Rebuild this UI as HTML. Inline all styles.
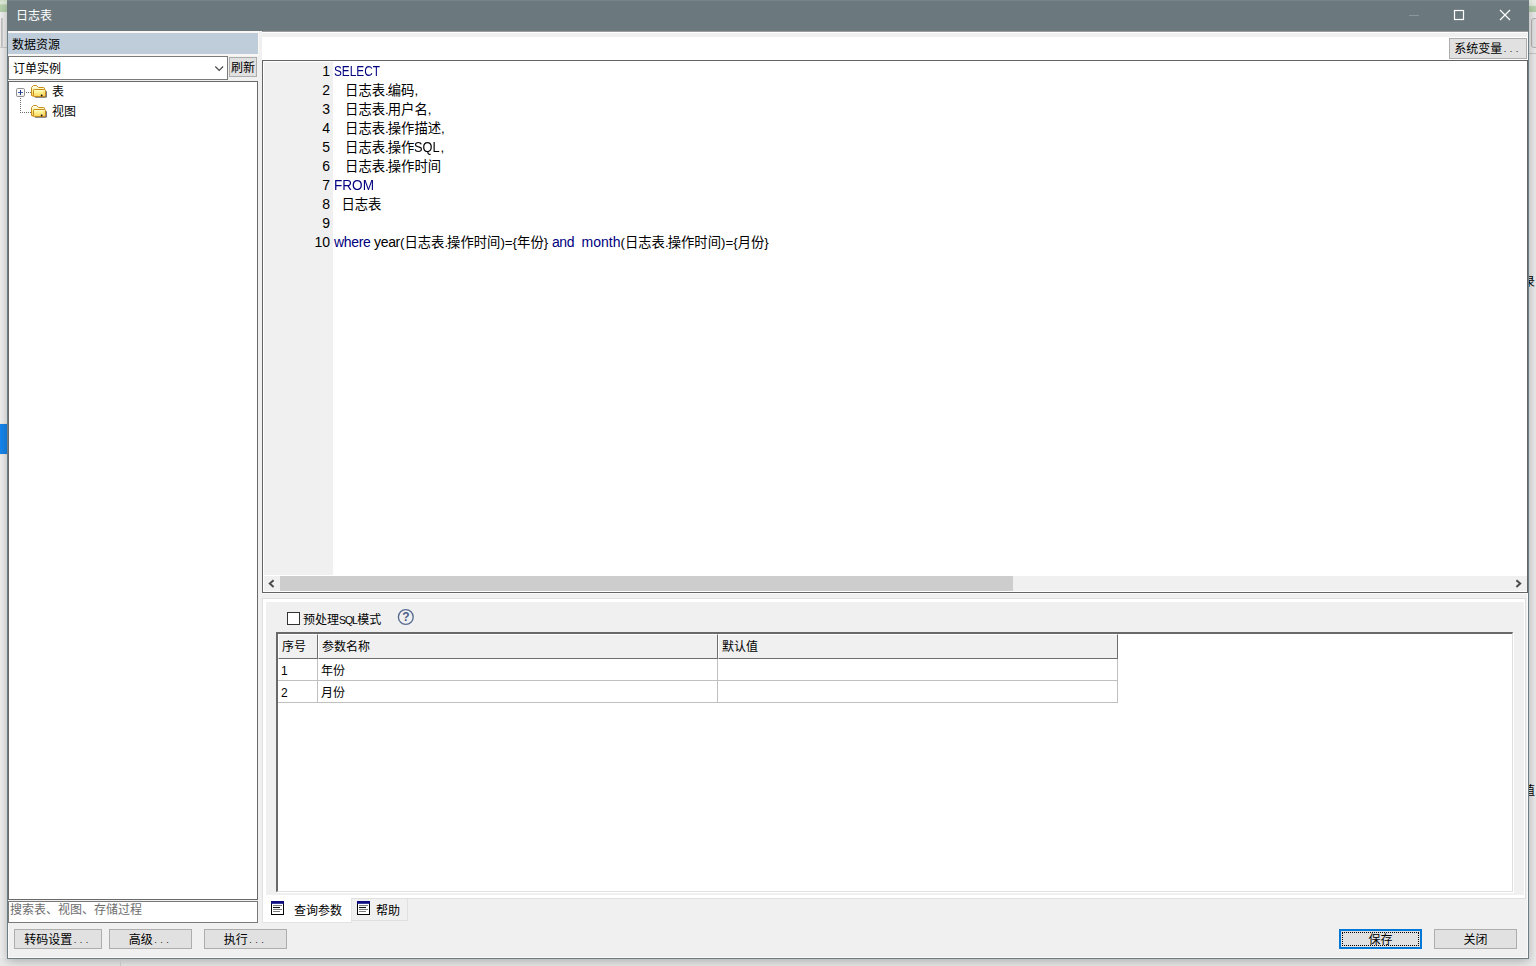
<!DOCTYPE html>
<html lang="zh-CN">
<head>
<meta charset="utf-8">
<title>日志表</title>
<style>
html,body{margin:0;padding:0;}
body{width:1536px;height:966px;position:relative;overflow:hidden;background:#e3e3e3;
 font-family:"Liberation Sans","Noto Sans CJK SC",sans-serif;font-size:12px;color:#000;}
.abs{position:absolute;box-sizing:border-box;}
/* background app strips */
#bgL{left:0;top:0;width:7px;height:966px;background:#f1f1f1;}
#bgLgreen{left:0;top:0;width:7px;height:12px;background:linear-gradient(180deg,#cfe0c8 0,#e4ede0 25%,#b9d3b0 45%,#b5d1ac 100%);}
#bgLblue{left:0;top:423px;width:7px;height:32px;background:#1787ef;border-top:1px solid #f3e9df;border-bottom:1px solid #f3e9df;}
#bgR{left:1528px;top:0;width:8px;height:966px;background:#ececec;}
#bgB{left:0;top:958px;width:1536px;height:8px;background:#eaeaea;}

#bgRgreen{left:1529px;top:0;width:7px;height:12px;background:linear-gradient(180deg,#e9eee6 0,#e4ebe1 45%,#b9d3b0 55%,#b5d1ac 100%);}
#bgRbox{left:1531px;top:18px;width:12px;height:30px;border:1px solid #b4b4b4;border-radius:3px;background:#e4e4e4;}
#bgRline{left:1529px;top:53px;width:7px;height:1px;background:#c9c9c9;}
#bgLl1{left:1px;top:18px;width:1px;height:29px;background:#c2c2c2;}
#bgLl2{left:2px;top:18px;width:1px;height:29px;background:#d2d2d2;}
#bgLl3{left:0;top:47px;width:7px;height:1px;background:#cfcfcf;}
#bgBl{left:120px;top:959px;width:1px;height:7px;background:#c4c4c4;}

.bgT{left:1529px;width:7px;height:14px;overflow:hidden;font-size:12px;line-height:14px;color:#000;white-space:nowrap;}
/* window */
#win{left:7px;top:0;width:1522px;height:959px;background:#f0f0f0;border:1px solid #6c7d84;border-top:none;box-shadow:inset 0 0 0 1px #fafafa,0 2px 10px rgba(0,0,0,.28);}
#title{left:7px;top:0;width:1522px;height:31px;background:#6b797f;border-top:1px solid #75838a;}
#title .t{left:9px;top:6px;color:#fff;font-size:12px;line-height:18px;white-space:nowrap;}
.btn{background:#e1e1e1;border:1px solid #adadad;font-size:12px;text-align:center;white-space:nowrap;line-height:18px;}

/* left panel */
#lpTop{left:8px;top:31px;width:251px;height:25px;background:#f8f7f6;}
#lpHead{left:8px;top:33px;width:250px;height:21px;background:#bfcddb;padding-left:4px;line-height:24px;font-size:12px;}
#combo{left:8px;top:56px;width:220px;height:24px;background:#fff;border:1px solid #7a7a7a;padding-left:4px;line-height:24px;font-size:12px;}
#refresh{left:229px;top:57px;width:28px;height:20px;line-height:20px;padding:0;}
#tree{left:8px;top:81px;width:250px;height:819px;background:#fff;border:1px solid #6a6a6a;}
#search{left:8px;top:901px;width:250px;height:22px;background:#fff;border:1px solid #7a7a7a;color:#6d6d6d;padding-left:1px;line-height:17px;font-size:12px;}
.tl{font-size:12px;line-height:14px;white-space:nowrap;}

/* right: toolbar + editor */
#rtLine{left:262px;top:31px;width:1266px;height:2px;background:linear-gradient(180deg,#9c9c9c 0,#9c9c9c 50%,#fff 50%,#fff 100%);}
#rtTool{left:262px;top:37px;width:1265px;height:23px;background:#fff;}
#sysvar{left:1449px;top:38px;width:78px;height:21px;line-height:21px;}
.dots{font-size:9.5px;letter-spacing:3.4px;margin-left:1.5px;position:relative;top:-1px;color:#222;}
#editor{left:262px;top:60px;width:1266px;height:533px;background:#fff;border:1px solid #646464;}
#gutter{left:1px;top:1px;width:69px;height:513px;background:#f0f0f0;}
#hscroll{left:1px;top:515px;width:1263px;height:15px;background:#f0f0f0;}
#hthumb{left:16px;top:0;width:733px;height:15px;background:#cdcdcd;}
.ln{position:absolute;left:0;width:67px;text-align:right;font-size:14px;line-height:19px;height:19px;color:#000;}
.cl{position:absolute;left:71px;font-size:13.33px;line-height:19px;height:19px;white-space:pre;color:#000;}
.kw{color:#000080;}
.lt{font-size:14px;letter-spacing:-.35px;}
.sx{display:inline-block;transform-origin:0 50%;}
.pd{letter-spacing:-1px;}

/* bottom params panel */
#pp{left:262px;top:598px;width:1264px;height:301px;background:#f0f0f0;border:1px solid #dfdfdf;}
#ppIn{left:263px;top:599px;width:1262px;height:299px;border:3px solid #fff;border-right-width:1px;background:#f0f0f0;}
#edLine{left:262px;top:593px;width:1265px;height:1px;background:#fafafa;}
#chk{left:287px;top:612px;width:13px;height:13px;background:#fff;border:1px solid #333;}
#chkL{left:303px;top:612px;font-size:12px;line-height:16px;white-space:nowrap;}
#grid{left:276px;top:632px;width:1237px;height:260px;background:#fff;border-top:2px solid #696969;border-left:2px solid #696969;border-right:1px solid #dfdfdf;border-bottom:1px solid #dfdfdf;box-shadow:1px 1px 0 #fff;}
.gh{background:#f0f0f0;border-right:1px solid #6e6e6e;border-bottom:1px solid #6e6e6e;border-top:1px solid #fff;border-left:1px solid #fff;height:25px;top:0;font-size:12px;line-height:24px;padding-left:3px;}
.gc{background:#fff;border-right:1px solid #c0c0c0;border-bottom:1px solid #c0c0c0;height:22px;font-size:12px;line-height:25px;padding-left:3px;}
#tabA{left:262px;top:898px;width:90px;height:25px;background:#fff;border:1px solid #e3e3e3;border-top:none;}
#tabB{left:352px;top:898px;width:56px;height:23px;background:#f0f0f0;border:1px solid #e0e0e0;border-left:none;}
.tabt{font-size:12px;line-height:16px;white-space:nowrap;}
</style>
</head>
<body>
<div class="abs" id="bgL"></div>
<div class="abs" id="bgLgreen"></div>
<div class="abs" id="bgLblue"></div>
<div class="abs" id="bgR"></div>
<div class="abs" id="bgB"></div>
<div class="abs" id="bgRgreen"></div><div class="abs" id="bgRbox"></div><div class="abs" id="bgRline"></div><div class="abs" id="bgLl1"></div><div class="abs" id="bgLl2"></div><div class="abs" id="bgLl3"></div>
<div class="abs" id="win"></div>
<div class="abs" id="bgBl"></div>
<div class="abs bgT" style="top:275px"><span style="margin-left:-6px">录</span></div>
<div class="abs bgT" style="top:784px"><span style="margin-left:-6px">值</span></div>
<div class="abs" id="title"><div class="abs t">日志表</div></div>

<div class="abs" id="lpTop"></div>
<div class="abs" id="lpHead">数据资源</div>
<div class="abs" id="combo">订单实例
<svg class="abs" style="left:204px;top:8px" width="12" height="8" viewBox="0 0 12 8"><path d="M2.3 1.5 L6.2 5.4 L10.1 1.5" fill="none" stroke="#444" stroke-width="1.1"/></svg></div>
<div class="abs btn" id="refresh">刷新</div>
<div class="abs" id="tree"></div>
<svg class="abs" style="left:9px;top:83px" width="80" height="40" viewBox="0 0 80 40">
 <defs>
  <linearGradient id="gF" x1="0" y1="0" x2="0" y2="1"><stop offset="0" stop-color="#fffff4"/><stop offset=".25" stop-color="#fffb9c"/><stop offset="1" stop-color="#fdd35f"/></linearGradient>
  <linearGradient id="gB" x1="0" y1="0" x2="0" y2="1"><stop offset="0" stop-color="#ffffff"/><stop offset=".45" stop-color="#fff59a"/><stop offset="1" stop-color="#ffc85a"/></linearGradient>
  <linearGradient id="gP" x1="0" y1="0" x2="0" y2="1"><stop offset="0" stop-color="#ffffff"/><stop offset=".6" stop-color="#fbfbfb"/><stop offset="1" stop-color="#e6e6e2"/></linearGradient>
  <filter id="fS" x="-20%" y="-20%" width="150%" height="150%"><feGaussianBlur stdDeviation=".6"/></filter>
 </defs>
 <path d="M17 9.5H23M11.5 15V30M13 29.5H23" fill="none" stroke="#6e6e6e" stroke-width="1" stroke-dasharray="1 1"/>
 <rect x="7.5" y="5.5" width="8" height="8" rx="1.2" fill="url(#gP)" stroke="#8f8f8f"/>
 <path d="M9 9.5H14" stroke="#3f5cae" stroke-width="1"/><path d="M11.5 7V12" stroke="#1f3585" stroke-width="1"/>
 <g id="fold">
  <rect x="25.5" y="7.6" width="12.4" height="7.2" rx="1.6" fill="#34363f" opacity=".75" filter="url(#fS)"/>
  <path d="M22.5 12.5V4.6L24.4 2.5H27.6L29.6 4.5H34.5Q35.5 4.5 35.5 5.5V7H24.5V13.2Z" fill="url(#gB)" stroke="#c58d1a" stroke-width="1" stroke-linejoin="round"/>
  <rect x="24.5" y="6.5" width="12" height="7" rx="1" fill="url(#gF)" stroke="#c58d1a" stroke-width="1"/>
  <path d="M35 7.5V13" stroke="#f4b851" stroke-width=".8" opacity=".7"/>
  <rect x="31.8" y="11.6" width="1.7" height="1.7" rx=".5" fill="#111"/>
 </g>
 <use href="#fold" y="20"/>
</svg>
<div class="abs tl" style="left:52px;top:85px">表</div>
<div class="abs tl" style="left:52px;top:105px">视图</div>
<div class="abs" id="search">搜索表、视图、存储过程</div>
<div class="abs btn" style="left:14px;top:929px;width:88px;height:20px;line-height:20px">转码设置<span class="dots">...</span></div>
<div class="abs btn" style="left:109px;top:929px;width:83px;height:20px;line-height:20px">高级<span class="dots">...</span></div>
<div class="abs btn" style="left:204px;top:929px;width:83px;height:20px;line-height:20px">执行<span class="dots">...</span></div>
<div class="abs btn" style="left:1339px;top:929px;width:83px;height:20px;line-height:18px;border:2px solid #0078d7">保存<div class="abs" style="left:1px;top:1px;right:1px;bottom:1px;border:1px dotted #000"></div></div>
<div class="abs btn" style="left:1434px;top:929px;width:83px;height:20px;line-height:20px">关闭</div>

<div class="abs" id="rtLine"></div>
<div class="abs" id="rtTool"></div>
<div class="abs btn" id="sysvar">系统变量<span class="dots">...</span></div>
<div class="abs" id="editor"><div class="abs" id="gutter"></div>
<div class="ln" style="top:1px">1</div><div class="cl" style="top:1px"><span class="kw" style="display:inline-block;width:45px;font-size:14px"><span class="sx" style="transform:scaleX(.843)">SELECT</span></span></div>
<div class="ln" style="top:20px">2</div><div class="cl" style="top:20px">   日志表<span class="pd">.</span>编码,</div>
<div class="ln" style="top:39px">3</div><div class="cl" style="top:39px">   日志表<span class="pd">.</span>用户名,</div>
<div class="ln" style="top:58px">4</div><div class="cl" style="top:58px">   日志表<span class="pd">.</span>操作描述,</div>
<div class="ln" style="top:77px">5</div><div class="cl" style="top:77px">   日志表<span class="pd">.</span>操作<span style="display:inline-block;width:26px;font-size:14px"><span class="sx" style="transform:scaleX(.914)">SQL</span></span>,</div>
<div class="ln" style="top:96px">6</div><div class="cl" style="top:96px">   日志表<span class="pd">.</span>操作时间</div>
<div class="ln" style="top:115px">7</div><div class="cl" style="top:115px"><span class="kw" style="display:inline-block;width:39px;font-size:14px"><span class="sx" style="transform:scaleX(.971)">FROM</span></span></div>
<div class="ln" style="top:134px">8</div><div class="cl" style="top:134px">  日志表</div>
<div class="ln" style="top:153px">9</div><div class="cl" style="top:153px"></div>
<div class="ln" style="top:172px">10</div><div class="cl" style="top:172px"><span class="kw lt">where</span> <span class="lt">year</span>(日志表<span class="pd">.</span>操作时间)={年份} <span class="kw lt">and</span>  <span class="kw lt" style="letter-spacing:0">month</span>(日志表<span class="pd">.</span>操作时间)={月份}</div>
<div class="abs" id="hscroll"><div class="abs" id="hthumb"></div>
<svg class="abs" style="left:3px;top:3px" width="9" height="9" viewBox="0 0 9 9"><path d="M6.6 1.2 L2.8 4.6 L6.6 8" fill="none" stroke="#4c4c4c" stroke-width="2"/></svg>
<svg class="abs" style="left:1250px;top:3px" width="9" height="9" viewBox="0 0 9 9"><path d="M2.4 1.2 L6.2 4.6 L2.4 8" fill="none" stroke="#4c4c4c" stroke-width="2"/></svg>
</div></div>

<div class="abs" id="pp"></div>
<div class="abs" id="ppIn"></div>
<div class="abs" id="edLine"></div>
<div class="abs" id="chk"></div>
<div class="abs" id="chkL">预处理<span style="font-size:10.5px;letter-spacing:-1.1px;margin-right:.5px">SQL</span>模式</div>
<svg class="abs" style="left:397px;top:608px" width="18" height="18" viewBox="0 0 18 18"><circle cx="8.8" cy="9" r="7.4" fill="none" stroke="#566b92" stroke-width="1.35"/><text x="8.8" y="13.2" font-size="12" font-weight="bold" text-anchor="middle" fill="#4b5f86" font-family="Liberation Sans, sans-serif">?</text></svg>
<div class="abs" id="grid">
 <div class="abs gh" style="left:0;width:40px">序号</div>
 <div class="abs gh" style="left:40px;width:400px">参数名称</div>
 <div class="abs gh" style="left:440px;width:400px">默认值</div>
 <div class="abs gc" style="left:0;top:25px;width:40px">1</div>
 <div class="abs gc" style="left:40px;top:25px;width:400px">年份</div>
 <div class="abs gc" style="left:440px;top:25px;width:400px"></div>
 <div class="abs gc" style="left:0;top:47px;width:40px">2</div>
 <div class="abs gc" style="left:40px;top:47px;width:400px">月份</div>
 <div class="abs gc" style="left:440px;top:47px;width:400px"></div>
</div>
<div class="abs" id="tabA"></div>
<div class="abs" id="tabB"></div>
<svg class="abs" style="left:271px;top:901px" width="14" height="15" viewBox="0 0 14 15"><rect x=".5" y="1.5" width="12" height="12" fill="#fff" stroke="#050505"/><rect x="0" y="0" width="13" height="2.8" fill="#0c0c80"/><path d="M2 4.5H11M2 8.5H11M2 10.5H9" stroke="#7a7a7a" stroke-width="1"/><path d="M2 6.5H9" stroke="#111" stroke-width="1.1"/></svg><svg class="abs" style="left:357px;top:901px" width="14" height="15" viewBox="0 0 14 15"><rect x=".5" y="1.5" width="12" height="12" fill="#fff" stroke="#050505"/><rect x="0" y="0" width="13" height="2.8" fill="#0c0c80"/><path d="M2 4.5H11M2 8.5H11M2 10.5H9" stroke="#7a7a7a" stroke-width="1"/><path d="M2 6.5H9" stroke="#111" stroke-width="1.1"/></svg>
<div class="abs tabt" style="left:294px;top:903px">查询参数</div>
<div class="abs tabt" style="left:376px;top:903px">帮助</div>

<svg class="abs" style="left:1400px;top:0" width="128" height="31" viewBox="0 0 128 31">
 <path d="M9 15.5H19" stroke="#8a979c" stroke-width="1"/>
 <rect x="54.5" y="10.5" width="9" height="9" fill="none" stroke="#fff" stroke-width="1.2"/>
 <path d="M100 10L110 20M110 10L100 20" stroke="#fff" stroke-width="1.2"/>
</svg>
</body>
</html>
